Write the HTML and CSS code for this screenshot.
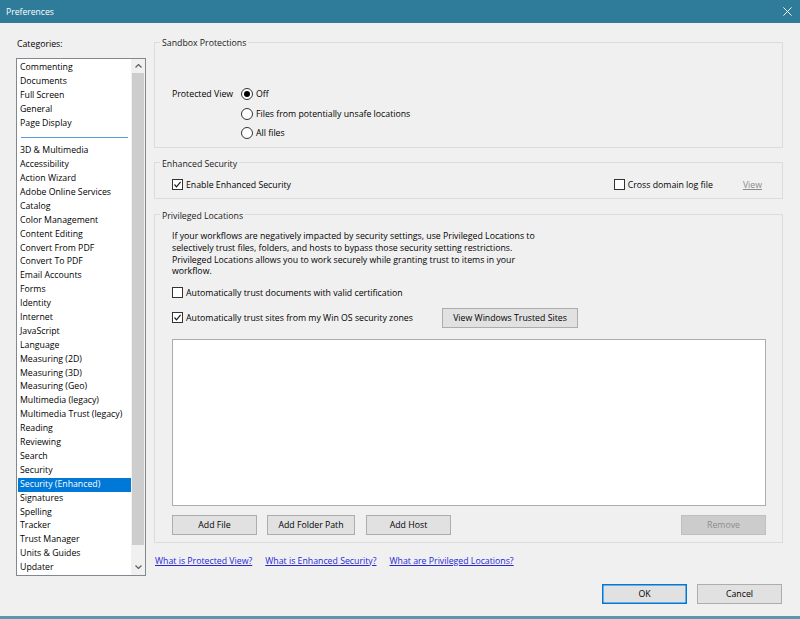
FILE: index.html
```html
<!DOCTYPE html>
<html lang="en">
<head>
<meta charset="utf-8">
<title>Preferences</title>
<link rel="stylesheet" href="styles.css">
</head>
<body>
<div class="window">
  <header class="titlebar">
    <span class="title">Preferences</span>
    <svg class="close" viewBox="0 0 10 10"><path d="M0.5 0.5L9.5 9.5M9.5 0.5L0.5 9.5"/></svg>
  </header>
  <div class="content">
    <aside class="cats">
      <div class="cats-label">Categories:</div>
      <div class="listbox">
        <ul class="items">
          <li>Commenting</li>
          <li>Documents</li>
          <li>Full Screen</li>
          <li>General</li>
          <li>Page Display</li>
          <li class="sep"></li>
          <li>3D &amp; Multimedia</li>
          <li>Accessibility</li>
          <li>Action Wizard</li>
          <li>Adobe Online Services</li>
          <li>Catalog</li>
          <li>Color Management</li>
          <li>Content Editing</li>
          <li>Convert From PDF</li>
          <li>Convert To PDF</li>
          <li>Email Accounts</li>
          <li>Forms</li>
          <li>Identity</li>
          <li>Internet</li>
          <li>JavaScript</li>
          <li>Language</li>
          <li>Measuring (2D)</li>
          <li>Measuring (3D)</li>
          <li>Measuring (Geo)</li>
          <li>Multimedia (legacy)</li>
          <li>Multimedia Trust (legacy)</li>
          <li>Reading</li>
          <li>Reviewing</li>
          <li>Search</li>
          <li>Security</li>
          <li class="selected">Security (Enhanced)</li>
          <li>Signatures</li>
          <li>Spelling</li>
          <li>Tracker</li>
          <li>Trust Manager</li>
          <li>Units &amp; Guides</li>
          <li>Updater</li>
        </ul>
        <div class="scrollbar">
          <div class="sb-btn sb-up"><svg viewBox="0 0 7 4"><polyline points="0.5,3.5 3.5,0.5 6.5,3.5"/></svg></div>
          <div class="sb-track"><div class="sb-thumb"></div></div>
          <div class="sb-btn sb-down"><svg viewBox="0 0 7 4"><polyline points="0.5,0.5 3.5,3.5 6.5,0.5"/></svg></div>
        </div>
      </div>
    </aside>

    <main class="panel">
      <fieldset class="group g-sandbox">
        <legend>Sandbox Protections</legend>
        <div class="g-body">
          <div class="pv">
            <span class="pv-label">Protected View</span>
            <div class="radios">
              <div class="opt"><span class="radio on"></span>Off</div>
              <div class="opt"><span class="radio"></span>Files from potentially unsafe locations</div>
              <div class="opt"><span class="radio"></span>All files</div>
            </div>
          </div>
        </div>
      </fieldset>

      <fieldset class="group g-enhanced">
        <legend>Enhanced Security</legend>
        <div class="g-body es-row">
          <div class="opt"><span class="check on"><svg viewBox="0 0 9 9"><polyline points="1.5,4.5 3.5,6.8 7.6,1.8"/></svg></span>Enable Enhanced Security</div>
          <div class="es-right">
            <div class="opt"><span class="check"></span>Cross domain log file</div>
            <span class="view-link">View</span>
          </div>
        </div>
      </fieldset>

      <fieldset class="group g-priv">
        <legend>Privileged Locations</legend>
        <div class="g-body">
          <p class="desc">If your workflows are negatively impacted by security settings, use Privileged Locations to<br>selectively trust files, folders, and hosts to bypass those security setting restrictions.<br>Privileged Locations allows you to work securely while granting trust to items in your<br>workflow.</p>
          <div class="opt row-cert"><span class="check"></span>Automatically trust documents with valid certification</div>
          <div class="row-sites">
            <div class="opt sites-label"><span class="check on"><svg viewBox="0 0 9 9"><polyline points="1.5,4.5 3.5,6.8 7.6,1.8"/></svg></span>Automatically trust sites from my Win OS security zones</div>
            <button class="btn btn-wide">View Windows Trusted Sites</button>
          </div>
          <div class="loc-list"></div>
          <div class="loc-buttons">
            <button class="btn">Add File</button>
            <button class="btn btn-folder">Add Folder Path</button>
            <button class="btn">Add Host</button>
            <button class="btn btn-disabled">Remove</button>
          </div>
        </div>
      </fieldset>

      <div class="links">
        <a class="help">What is Protected View?</a>
        <a class="help">What is Enhanced Security?</a>
        <a class="help">What are Privileged Locations?</a>
      </div>

      <div class="footer">
        <button class="btn btn-default">OK</button>
        <button class="btn">Cancel</button>
      </div>
    </main>
  </div>
</div>
</body>
</html>
```

FILE: styles.css
```css
* { box-sizing: border-box; }
html, body { margin: 0; padding: 0; }
body {
  width: 800px;
  height: 619px;
  overflow: hidden;
  background: #f0f0f0;
  font-family: "Open Sans", "Noto Sans", sans-serif;
  font-size: 8.75px;
  color: #000;
}
.window {
  height: 619px;
  display: flex;
  flex-direction: column;
  border-bottom: 3px solid #5d97ad;
}
.titlebar {
  flex: none;
  height: 23px;
  background: #2e7c9a;
  color: #fff;
  display: flex;
  align-items: center;
  justify-content: space-between;
  padding: 0 8px 0 6px;
}
.title { font-size: 8.6px; }
.close { width: 9px; height: 9px; }
.close path { stroke: #fff; stroke-width: 1.1; fill: none; }

.content { flex: 1; display: flex; }

/* Categories */
.cats { flex: none; width: 146px; padding: 14px 0 0 16px; }
.cats-label { height: 14px; line-height: 14px; margin-bottom: 7px; padding-left: 1px; }
.listbox {
  width: 130px;
  height: 518px;
  border: 1px solid #828790;
  background: #fff;
  display: flex;
}
.items { list-style: none; margin: 0; padding: 2px 0 0; flex: 1; min-width: 0; }
.items li {
  height: 13.9px;
  line-height: 13.9px;
  margin-left: 1px;
  padding-left: 2px;
  white-space: nowrap;
}
.items li.sep { display: flex; align-items: center; padding: 0 3px 0 3px; }
.items li.sep::before { content: ""; flex: 1; height: 1px; background: #5b9bd5; }
.items li.selected { background: #0078d7; color: #fff; }

.scrollbar { flex: none; width: 14px; display: flex; flex-direction: column; background: #f0f0f0; }
.sb-btn { display: flex; align-items: center; justify-content: center; }
.sb-up { height: 14px; }
.sb-down { height: 16px; }
.sb-btn svg { width: 7px; height: 4px; }
.sb-btn polyline { fill: none; stroke: #606060; stroke-width: 1.2; }
.sb-track { flex: 1; padding: 0 1px; }
.sb-thumb { height: 472px; background: #cdcdcd; }

/* Right panel */
.panel { flex: none; width: 629px; margin-left: 8px; padding-top: 12px; display: flex; flex-direction: column; }
fieldset.group { margin: 0; padding: 0; border: 1px solid #dcdcdc; min-width: 0; }
legend { margin-left: 5px; padding: 0 2px; line-height: 16px; height: 14px; color: #1a1a1a; }
.g-body { padding: 0 16px 0 17px; }

.g-sandbox .g-body { padding-top: 35.5px; padding-bottom: 3.5px; }
.pv { display: grid; grid-template-columns: 69px auto; }
.pv-label { line-height: 19.5px; }
.radios { display: flex; flex-direction: column; }
.radios .opt { height: 19.5px; }

.opt { display: flex; align-items: center; white-space: nowrap; }
.radio {
  flex: none;
  width: 12px; height: 12px;
  border: 1px solid #333;
  border-radius: 50%;
  background: #fff;
  margin-right: 3px;
  display: flex; align-items: center; justify-content: center;
}
.radio.on::after { content: ""; width: 6px; height: 6px; border-radius: 50%; background: #000; }
.check {
  flex: none;
  width: 11px; height: 11px;
  border: 1px solid #333;
  background: #fff;
  margin-right: 3px;
  display: flex; align-items: center; justify-content: center;
}
.check svg { width: 9px; height: 9px; }
.check polyline { fill: none; stroke: #1a1a1a; stroke-width: 1.2; }

.g-enhanced { margin-top: 8px !important; }
.es-row { display: flex; align-items: center; height: 14px; box-sizing: content-box; padding-top: 8px; padding-bottom: 6px; padding-right: 20px; }
.es-right { margin-left: auto; display: flex; align-items: center; }
.view-link { margin-left: 30px; color: #8a8a8a; text-decoration: underline; }

.g-priv { margin-top: 9px !important; }
.g-priv .g-body { padding-top: 9.7px; padding-bottom: 7px; }
.desc { margin: 0; line-height: 11.7px; }
.row-cert { height: 14px; margin-top: 7.5px; }
.row-sites { display: flex; align-items: center; height: 20px; margin-top: 8px; }
.sites-label { width: 270px; }
.loc-list { margin-top: 11px; width: 594px; height: 167px; background: #fff; border: 1px solid #adadad; }
.loc-buttons { display: flex; margin-top: 9px; width: 594px; }
.loc-buttons .btn-folder { width: 88px; margin: 0 11px 0 10px; }
.loc-buttons .btn-disabled { margin-left: auto; }

.btn {
  width: 85px;
  height: 20px;
  padding: 0;
  font-family: inherit;
  font-size: inherit;
  color: #000;
  background: #e1e1e1;
  border: 1px solid #adadad;
  border-radius: 0;
}
.btn-wide { width: 136px; }
.btn-disabled { background: #cccccc; border-color: #bfbfbf; color: #8c8c8c; }
.btn-default { border-color: #0078d7; box-shadow: inset 0 0 0 0.5px #0078d7; }

.links { display: flex; gap: 13px; margin-top: 11px; height: 14px; line-height: 14px; padding-left: 1px; }
.help { color: #2626d6; text-decoration: underline; }

.footer { display: flex; justify-content: flex-end; gap: 10px; margin-top: 16px; padding-right: 1px; }
```
